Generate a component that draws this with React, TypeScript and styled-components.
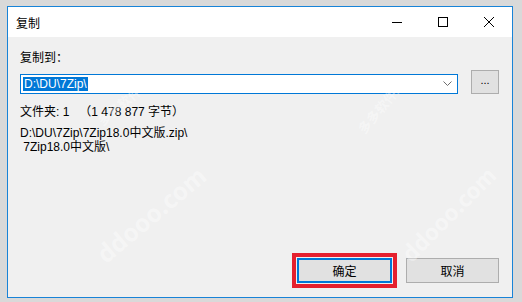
import React from 'react';
import styled, { createGlobalStyle } from 'styled-components';

const GlobalStyle = createGlobalStyle`
  html, body {
    margin: 0;
    padding: 0;
    background: #d9d9d9;
  }
  body {
    width: 522px;
    height: 302px;
    overflow: hidden;
    font-family: "Liberation Sans", "Noto Sans CJK SC", Arial, sans-serif;
    font-size: 12px;
    color: #000;
  }
`;

const Window = styled.div`
  position: relative;
  box-sizing: border-box;
  width: 506px;
  height: 292px;
  margin: 6px 0 0 7px;
  border: 1px solid #1883d7;
  background: #f0f0f0;
  display: flex;
  flex-direction: column;
  overflow: hidden;
`;

const TitleBar = styled.div`
  height: 30px;
  background: #fff;
  display: flex;
  align-items: center;
  padding-left: 8px;
`;

const Title = styled.span`
  flex: 1;
  font-size: 12px;
  color: #000;
`;

const CaptionButton = styled.div`
  width: 46px;
  height: 30px;
  display: flex;
  align-items: center;
  justify-content: center;
`;

const Content = styled.div`
  flex: 1;
  display: flex;
  flex-direction: column;
  padding: 13px 13px 0 12px;
`;

const Label = styled.div`
  line-height: 16px;
  height: 16px;
`;

const PathRow = styled.div`
  display: flex;
  align-items: flex-end;
  gap: 13px;
  margin-top: 4px;
`;

const Combo = styled.div`
  box-sizing: border-box;
  width: 438px;
  height: 20px;
  border: 1px solid #0078d7;
  background: #fff;
  display: flex;
  align-items: center;
  padding: 0 5px 0 2px;
`;

const Selected = styled.span`
  background: #0078d7;
  color: #fff;
  line-height: 14px;
  padding: 0 1px;
`;

const Spacer = styled.div`
  flex: 1;
`;

const Button = styled.div<{ $w: number; $focused?: boolean }>`
  box-sizing: border-box;
  width: ${p => p.$w}px;
  height: 25px;
  background: #e1e1e1;
  border: ${p => (p.$focused ? '2px solid #0078d7' : '1px solid #adadad')};
  display: flex;
  align-items: center;
  justify-content: center;
  font-size: 12px;
  color: #000;
`;

const Browse = styled(Button)`
  height: 24px;
  padding-bottom: 4px;
  font-size: 11px;
`;

const Info = styled.div`
  margin-top: 10px;
  line-height: 16px;
  white-space: pre;
`;

const PathText = styled.div`
  margin-top: 6px;
  line-height: 14px;
  white-space: pre;
`;

const Footer = styled.div`
  margin-top: auto;
  display: flex;
  justify-content: flex-end;
  align-items: center;
  gap: 9px;
  padding: 0 13px 9px 0;
`;

const Highlight = styled.div`
  border: 4px solid #e5202e;
  padding: 1px;
`;

const Watermark = styled.div<{ $x: number; $y: number; $r: number; $size: number }>`
  position: absolute;
  left: ${p => p.$x}px;
  top: ${p => p.$y}px;
  transform: rotate(${p => p.$r}deg);
  transform-origin: left top;
  font-size: ${p => p.$size}px;
  font-weight: bold;
  color: rgba(255, 255, 255, 0.4);
  white-space: nowrap;
  pointer-events: none;
  font-family: "Noto Sans CJK SC", "Liberation Sans", sans-serif;
`;

const Line = ({ d }: { d: string }) => (
  <svg width="12" height="12" viewBox="0 0 12 12" fill="none" stroke="#000" strokeWidth="1" shapeRendering="crispEdges">
    <path d={d} />
  </svg>
);

export default function App() {
  return (
    <>
      <GlobalStyle />
      <Window>
        <TitleBar>
          <Title>复制</Title>
          <CaptionButton>
            <Line d="M1 6.5H11" />
          </CaptionButton>
          <CaptionButton>
            <Line d="M1.5 1.5H10.5V10.5H1.5Z" />
          </CaptionButton>
          <CaptionButton>
            <svg width="12" height="12" viewBox="0 0 12 12" fill="none" stroke="#000" strokeWidth="1">
              <path d="M1 1L11 11M11 1L1 11" />
            </svg>
          </CaptionButton>
        </TitleBar>
        <Content>
          <Label>复制到：</Label>
          <PathRow>
            <Combo>
              <Selected>D:\DU\7Zip\</Selected>
              <Spacer />
              <svg width="9" height="6" viewBox="0 0 9 6" fill="none" stroke="#6d6d6d" strokeWidth="1">
                <path d="M0.5 0.5L4.5 4.5L8.5 0.5" />
              </svg>
            </Combo>
            <Browse $w={28}>...</Browse>
          </PathRow>
          <Info>文件夹: 1   （1 478 877 字节）</Info>
          <PathText>
            {'D:\\DU\\7Zip\\7Zip18.0中文版.zip\\\n 7Zip18.0中文版\\'}
          </PathText>
        </Content>
        <Footer>
          <Highlight>
            <Button $w={95} $focused>确定</Button>
          </Highlight>
          <Button $w={93}>取消</Button>
        </Footer>
        <Watermark $x={85} $y={108} $r={-40} $size={13}>多多软件站</Watermark>
        <Watermark $x={80} $y={236} $r={-40} $size={24}>ddooo.com</Watermark>
        <Watermark $x={345} $y={118} $r={-50} $size={13}>多多软件站</Watermark>
        <Watermark $x={385} $y={238} $r={-45} $size={22}>ddooo.com</Watermark>
      </Window>
    </>
  );
}
